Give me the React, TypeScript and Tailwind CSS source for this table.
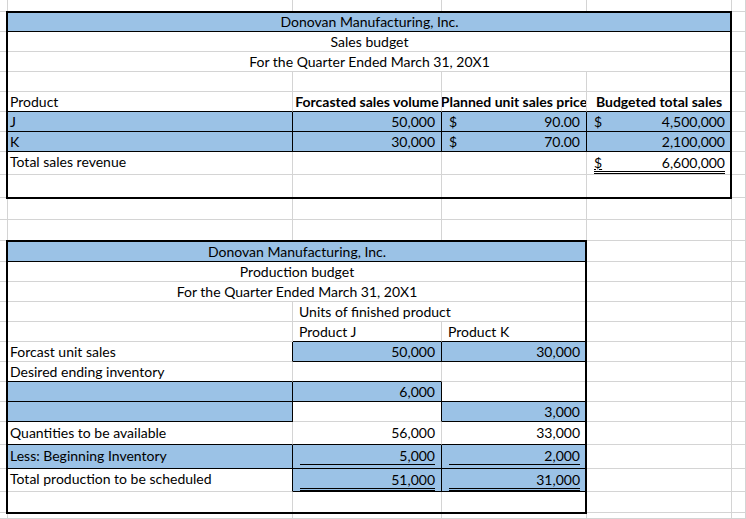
import React from "react";
import clsx from "clsx";

// Excel-like sheet: two budget tables drawn on a fixed cell grid

const ROW = [
  "row-start-1", "row-start-2", "row-start-3", "row-start-4", "row-start-5", "row-start-6",
  "row-start-7", "row-start-8", "row-start-9", "row-start-10", "row-start-11", "row-start-12",
  "row-start-13", "row-start-14", "row-start-15", "row-start-16", "row-start-17", "row-start-18",
  "row-start-19", "row-start-20", "row-start-21", "row-start-22", "row-start-23", "row-start-24",
  "row-start-25", "row-start-26",
];
const COL = ["col-start-1", "col-start-2", "col-start-3", "col-start-4", "col-start-5", "col-start-6"];
const SPAN = ["", "col-span-1", "col-span-2", "col-span-3", "col-span-4"];

type Spec = {
  c: number;
  span?: number;
  blue?: boolean;
  rb?: boolean;
  bb?: boolean;
  text?: string;
  align?: "left" | "indent" | "center" | "right";
  bold?: boolean;
  dollar?: boolean;
  line?: "single" | "double";
};

// bottom padding of the text per row (taller rows sit text higher)
const PB: Record<number, string> = {
  8: "pb-[3px]",
  21: "pb-[2px]",
  22: "pb-[3px]",
  23: "pb-[3px]",
};

const rows: Spec[][] = [
  [],
  [{ c: 1, span: 4, blue: true, bb: true, text: "Donovan Manufacturing, Inc.", align: "center" }],
  [{ c: 1, span: 4, text: "Sales budget", align: "center" }],
  [{ c: 1, span: 4, text: "For the Quarter Ended March 31, 20X1", align: "center" }],
  [],
  [
    { c: 1, text: "Product", bb: true },
    { c: 2, text: "Forcasted sales volume", bold: true, align: "center", bb: true },
    { c: 3, text: "Planned unit sales price", bold: true, align: "center", bb: true },
    { c: 4, text: "Budgeted total sales", bold: true, align: "center", bb: true },
  ],
  [
    { c: 1, text: "J", blue: true, rb: true, bb: true },
    { c: 2, text: "50,000", align: "right", blue: true, rb: true, bb: true },
    { c: 3, text: "90.00", dollar: true, blue: true, rb: true, bb: true },
    { c: 4, text: "4,500,000", dollar: true, blue: true, bb: true },
  ],
  [
    { c: 1, text: "K", blue: true, rb: true, bb: true },
    { c: 2, text: "30,000", align: "right", blue: true, rb: true, bb: true },
    { c: 3, text: "70.00", dollar: true, blue: true, rb: true, bb: true },
    { c: 4, text: "2,100,000", align: "right", blue: true, bb: true },
  ],
  [
    { c: 1, text: "Total sales revenue" },
    { c: 4, text: "6,600,000", dollar: true, line: "double" },
  ],
  [],
  [],
  [],
  [{ c: 1, span: 3, blue: true, bb: true, text: "Donovan Manufacturing, Inc.", align: "center" }],
  [{ c: 1, span: 3, text: "Production budget", align: "center" }],
  [{ c: 1, span: 3, text: "For the Quarter Ended March 31, 20X1", align: "center" }],
  [{ c: 2, span: 2, text: "Units of finished product", align: "indent" }],
  [
    { c: 2, text: "Product J", align: "indent", bb: true },
    { c: 3, text: "Product K", align: "indent", bb: true },
  ],
  [
    { c: 1, text: "Forcast unit sales", rb: true },
    { c: 2, text: "50,000", align: "right", blue: true, rb: true, bb: true },
    { c: 3, text: "30,000", align: "right", blue: true, bb: true },
  ],
  [
    { c: 1, text: "Desired ending inventory", bb: true },
    { c: 2, bb: true },
  ],
  [
    { c: 1, blue: true, rb: true, bb: true },
    { c: 2, text: "6,000", align: "right", blue: true, rb: true, bb: true },
    { c: 3, bb: true },
  ],
  [
    { c: 1, blue: true, rb: true, bb: true },
    { c: 2, rb: true },
    { c: 3, text: "3,000", align: "right", blue: true, bb: true },
  ],
  [
    { c: 1, text: "Quantities to be available", bb: true },
    { c: 2, text: "56,000", align: "right", bb: true },
    { c: 3, text: "33,000", align: "right", bb: true },
  ],
  [
    { c: 1, text: "Less: Beginning Inventory", blue: true, rb: true, bb: true },
    { c: 2, text: "5,000", blue: true, rb: true, bb: true, line: "single" },
    { c: 3, text: "2,000", blue: true, bb: true, line: "single" },
  ],
  [
    { c: 1, text: "Total production to be scheduled", rb: true },
    { c: 2, text: "51,000", blue: true, rb: true, bb: true, line: "double" },
    { c: 3, text: "31,000", blue: true, bb: true, line: "double" },
  ],
  [],
  [],
];

function SheetCell({ r, s }: { r: number; s: Spec }) {
  const pb = PB[r] ?? "pb-0";
  const align = s.align ?? "left";
  const base = clsx(
    ROW[r],
    COL[s.c],
    SPAN[s.span ?? 1],
    "flex items-end overflow-hidden whitespace-nowrap border-r border-b",
    s.rb ? "border-r-black" : "border-r-[#d4d4d4]",
    s.bb ? "border-b-black" : "border-b-[#d4d4d4]",
    s.blue ? "bg-[#9bc2e6]" : "bg-white"
  );

  if (s.line) {
    return (
      <div className={base}>
        <div
          className={clsx(
            "flex flex-1 items-end ml-[7px] mr-[6px]",
            s.dollar ? "justify-between" : "justify-end",
            s.line === "double" ? "border-b-[3px] border-double border-black" : "mb-[3px] border-b border-black"
          )}
        >
          {s.dollar && <span className="leading-[16px] underline">$</span>}
          <span className="leading-[16px]">{s.text}</span>
        </div>
      </div>
    );
  }

  if (s.dollar) {
    return (
      <div className={clsx(base, "justify-between pl-[7px] pr-[6px]")}>
        <span className={clsx("leading-[18px]", pb)}>$</span>
        <span className={clsx("leading-[18px]", pb)}>{s.text}</span>
      </div>
    );
  }

  return (
    <div
      className={clsx(
        base,
        align === "left" && "justify-start pl-[2px]",
        align === "indent" && "justify-start pl-[6px]",
        align === "center" && "justify-center",
        align === "right" && "justify-end pr-[6px]"
      )}
    >
      {s.text && <span className={clsx("leading-[18px]", pb, s.bold && "font-bold")}>{s.text}</span>}
    </div>
  );
}

export default function App() {
  const cells: React.ReactNode[] = [];
  rows.forEach((specs, r) => {
    let c = 0;
    while (c < 6) {
      const s = specs.find((x) => x.c === c) ?? { c };
      cells.push(<SheetCell key={`${r}-${c}`} r={r} s={s} />);
      c += s.span ?? 1;
    }
  });

  return (
    <div className="w-[746px] h-[519px] overflow-hidden bg-white text-black text-[14px] font-['Lato',sans-serif]">
      <div className="grid h-full grid-cols-[8px_285px_149px_145px_145px_1fr] grid-rows-[12px_repeat(7,20px)_23px_23px_22px_21px_21px_repeat(8,20px)_23px_24px_23px_21px_1fr]">
        {cells}
        {/* thick outside borders of the two tables */}
        <div className="col-start-2 col-span-4 row-start-2 row-span-9 -ml-[2px] -mt-[1px] -mb-[1px] border-2 border-black pointer-events-none" />
        <div className="col-start-2 col-span-3 row-start-13 row-span-13 -ml-[2px] -mt-[1px] -mb-[1px] border-2 border-black pointer-events-none" />
      </div>
    </div>
  );
}
